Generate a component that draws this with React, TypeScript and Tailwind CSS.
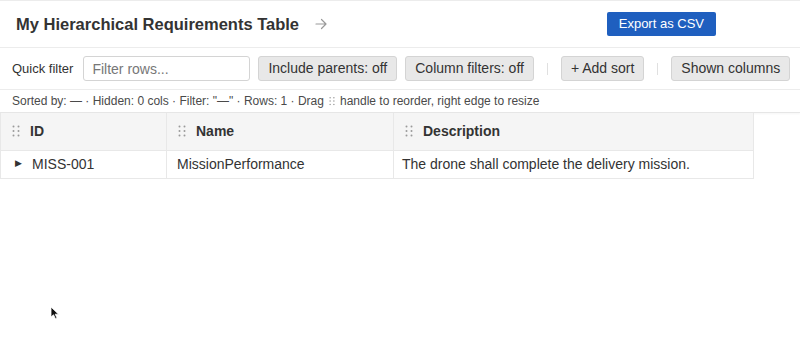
import React from "react";

const font = { fontFamily: '"Liberation Sans", Arial, sans-serif' };

function Grip({ className = "" }: { className?: string }) {
  return (
    <svg width="8" height="12" viewBox="0 0 8 12" className={className} fill="#9a9a9a">
      <circle cx="1.5" cy="1.5" r="1" />
      <circle cx="6.5" cy="1.5" r="1" />
      <circle cx="1.5" cy="6" r="1" />
      <circle cx="6.5" cy="6" r="1" />
      <circle cx="1.5" cy="10.5" r="1" />
      <circle cx="6.5" cy="10.5" r="1" />
    </svg>
  );
}

function ToolButton({ children }: { children: React.ReactNode }) {
  return (
    <button
      type="button"
      className="h-[25px] rounded-[3px] border border-[#d4d4d4] bg-[#e8e8e8] px-[9px] text-[14px] text-[#333]"
    >
      {children}
    </button>
  );
}

const Sep = () => <div className="h-[12px] w-px bg-[#e0e0e0]" />;

export default function App() {
  return (
    <div className="relative h-[361px] w-[800px] overflow-hidden bg-white text-[#333]" style={font}>
      <header className="flex h-[48px] items-center border-y border-[#ececec] pl-4 pr-[84px]">
        <h1 className="text-[16.5px] font-bold text-[#333]">My Hierarchical Requirements Table</h1>
        <svg className="ml-[16px]" width="12" height="12" viewBox="0 0 12 12" fill="none" stroke="#999" strokeWidth="1.2" strokeLinecap="round" strokeLinejoin="round">
          <path d="M1 6h10M6.5 1.5 11 6l-4.5 4.5" />
        </svg>
        <button
          type="button"
          className="ml-auto h-[24px] rounded-[2px] bg-[#1f5fbf] px-[12px] text-[13px] text-white"
        >
          Export as CSV
        </button>
      </header>

      <div className="flex h-[42px] items-center gap-2 border-b border-[#ececec] pl-3">
        <span className="mr-[2px] text-[13px] text-[#333]">Quick filter</span>
        <input
          placeholder="Filter rows..."
          className="h-[25px] w-[167px] rounded-[3px] border border-[#d4d4d4] px-2 text-[14px] placeholder:text-[#777] outline-none"
        />
        <ToolButton>Include parents: off</ToolButton>
        <ToolButton>Column filters: off</ToolButton>
        <div className="px-[5px]"><Sep /></div>
        <ToolButton>+ Add sort</ToolButton>
        <div className="px-[5px]"><Sep /></div>
        <ToolButton>Shown columns</ToolButton>
      </div>

      <div className="flex h-[23px] items-center border-b border-[#e6e6e6] pl-3 text-[12px] text-[#4a4a4a] shadow-[0_1px_2px_rgba(0,0,0,0.04)]">
        <span>Sorted by: — · Hidden: 0 cols · Filter: "—" · Rows: 1 · Drag</span>
        <Grip className="mx-[4px] scale-75" />
        <span>handle to reorder, right edge to resize</span>
      </div>

      <table className="w-[754px] border-collapse text-[14px]">
        <thead>
          <tr className="h-[37px] bg-[#f5f5f5]">
            <th className="w-[166px] border border-t-0 border-[#e8e8e8] pl-[11px] text-left font-bold">
              <div className="flex items-center gap-[10px]"><Grip />ID</div>
            </th>
            <th className="w-[227px] border border-t-0 border-[#e8e8e8] pl-[11px] text-left font-bold">
              <div className="flex items-center gap-[10px]"><Grip />Name</div>
            </th>
            <th className="border border-t-0 border-[#e8e8e8] pl-[11px] text-left font-bold">
              <div className="flex items-center gap-[10px]"><Grip />Description</div>
            </th>
          </tr>
        </thead>
        <tbody>
          <tr className="h-[28px]">
            <td className="border border-[#e8e8e8] pl-[14px]">
              <div className="flex items-center gap-[10px]">
                <span className="text-[9px] text-[#333]">▶</span>
                MISS-001
              </div>
            </td>
            <td className="border border-[#e8e8e8] pl-[10px]">MissionPerformance</td>
            <td className="border border-[#e8e8e8] pl-[8px]">The drone shall complete the delivery mission.</td>
          </tr>
        </tbody>
      </table>

      <svg className="absolute left-[50px] top-[306px]" width="10" height="14" viewBox="0 0 10 14">
        <path d="M1 1 L1 11 L3.5 8.8 L5.5 12.8 L7 12 L5.2 8.2 L8.5 8.2 Z" fill="#111" stroke="#fff" strokeWidth="0.8" />
      </svg>
    </div>
  );
}
